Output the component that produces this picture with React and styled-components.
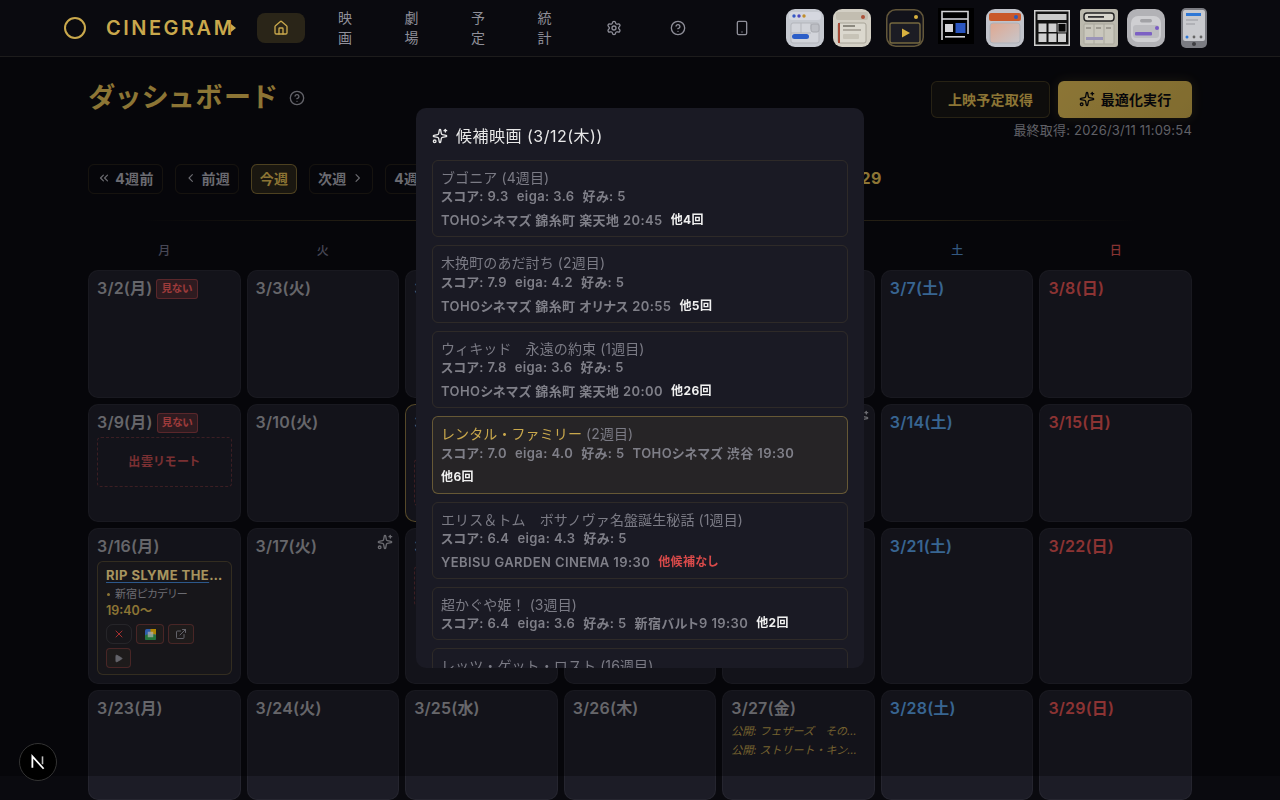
import React from 'react';
import styled, { createGlobalStyle, css } from 'styled-components';
import { House, Settings, CircleHelp, Smartphone, Sparkles, ChevronsLeft, ChevronsRight, ChevronLeft, ChevronRight, X, ExternalLink, Play } from 'lucide-react';

const GOLD = '#c9a84c';
const Global = createGlobalStyle`
  html, body { margin: 0; height: 800px; overflow: hidden; background: #0a0a0f; }
  * { box-sizing: border-box; }
  body { font-family: Inter, "Noto Sans CJK JP", sans-serif; color: #e8e8e8; font-feature-settings: "palt"; }
`;
const Page = styled.div`position: relative; width: 1280px; height: 800px; overflow: hidden; background: #0a0a0f;`;
const Header = styled.header`
  position: relative; z-index: 2; height: 57px; padding-left: 64px; display: flex; align-items: center;
  background: #0a0a0f; border-bottom: 1px solid #1d1c1c;
`;
const Logo = styled.div`display: flex; align-items: center; gap: 20px; width: 193px; flex: none; color: ${GOLD};`;
const LogoRing = styled.span`width: 22px; height: 22px; border: 2px solid ${GOLD}; border-radius: 50%; flex: none;`;
const LogoText = styled.span`position: relative; font-size: 20px; font-weight: 600; letter-spacing: 2.5px; white-space: nowrap; line-height: 24px; margin-right: -6px;`;
const LogoTip = styled.svg`position: absolute; right: -1px; top: 8px;`;
const Nav = styled.nav`display: flex; align-items: center; gap: 14px; flex: none;`;
const NavIcon = styled.div`
  width: ${p => p.$w || 50}px; height: 30px; border-radius: 8px; display: flex; align-items: center; justify-content: center;
  color: ${p => p.$active ? GOLD : '#8f8f99'}; background: ${p => p.$active ? '#2a2518' : 'transparent'};
  margin-left: ${p => p.$ml || 0}px;
`;
const NavText = styled.div`width: 52.5px; text-align: center; font-size: 14px; line-height: 20px; padding: 0 19px; color: #8f8f99; letter-spacing: .5px; font-weight: 400; font-feature-settings: normal;`;
const Thumbs = styled.div`display: flex; align-items: center; margin-left: 19px;`;
const Thumb = styled.svg`flex: none; margin-left: ${p => p.$ml}px; display: block;`;

const Main = styled.main`padding: 24px 88px 0;`;
const TopRow = styled.div`display: flex; justify-content: space-between; align-items: flex-start; height: 57px;`;
const TitleWrap = styled.div`display: flex; align-items: center; gap: 10px; height: 33px; padding-top: 1px;`;
const Title = styled.h1`margin: 0; font-size: 27px; line-height: 32px; font-weight: 700; letter-spacing: 2.5px; color: ${GOLD};`;
const HelpIcon = styled(CircleHelp)`color: #8f8f99;`;
const Actions = styled.div`display: flex; flex-direction: column; align-items: flex-end; gap: 4px;`;
const ActionRow = styled.div`display: flex; gap: 8px;`;
const GhostBtn = styled.div`
  height: 37px; width: 119px; padding-bottom: 2px; display: flex; align-items: center; justify-content: center; border-radius: 6px; font-size: 14px; font-weight: 700; letter-spacing: .2px;
  color: ${GOLD}; border: 1px solid rgba(201,168,76,.2); background: rgba(201,168,76,.06);
`;
const PrimaryBtn = styled.div`
  height: 37px; width: 134px; padding-bottom: 2px; display: flex; align-items: center; justify-content: center; gap: 6px; border-radius: 6px; font-size: 14px; font-weight: 700; letter-spacing: .1px;
  color: #0a0a0f; background: linear-gradient(135deg, #c9a94e, #b79a44); box-shadow: 0 0 12px rgba(201,168,76,.16);
`;
const Fetched = styled.div`font-size: 13px; line-height: 16px; color: #8a8a94; letter-spacing: .2px;`;
const WeekNav = styled.div`display: flex; align-items: center; gap: 12px; margin-top: 26px; height: 30px;`;
const WeekBtn = styled.div`
  height: 30px; padding: 0 8px 3px; display: flex; align-items: center; justify-content: center; gap: 4px; border-radius: 6px; font-size: 14px; font-weight: 700; white-space: nowrap; letter-spacing: .3px;
  width: ${p => p.$w}px;
  ${p => p.$today ? css`color: ${GOLD}; background: rgba(201,168,76,.15); border: 1px solid rgba(201,168,76,.45);` :
    css`color: #9a9aa2; border: 1px solid rgba(201,168,76,.12);`}
`;
const RangeLabel = styled.div`margin-left: 269px; margin-bottom: 4px; font-size: 16px; font-weight: 700; color: ${GOLD}; white-space: nowrap; letter-spacing: .4px;`;
const Divider = styled.div`height: 1px; margin-top: 26px; background: linear-gradient(90deg, transparent 5%, rgba(201,168,76,.22) 25%, rgba(201,168,76,.22) 75%, transparent 95%);`;
const Weekdays = styled.div`display: grid; grid-template-columns: repeat(7, 1fr); gap: 6px; margin-top: 22px; height: 27px;`;
const Weekday = styled.div`text-align: center; font-size: 12px; line-height: 16px; font-weight: 500; color: ${p => p.$c};`;
const Grid = styled.div`display: grid; grid-template-columns: repeat(7, 1fr); grid-template-rows: 128px 118px 156px 110px; gap: 6px;`;
const Cell = styled.div`
  position: relative; min-width: 0; padding: 8px; border-radius: 10px; background: #1c1c26;
  border: 1px solid ${p => p.$today ? 'rgba(201,168,76,.55)' : 'rgba(255,255,255,.045)'};
`;
const DateRow = styled.div`display: flex; align-items: center; gap: 4px; height: 20px; margin-bottom: 4px;`;
const DateText = styled.span`font-size: 16px; font-weight: 600; line-height: 18px; margin-bottom: 2px; white-space: nowrap; letter-spacing: .2px; color: ${p => p.$c};`;
const Badge = styled.span`font-size: 10.5px; line-height: 18px; font-weight: 600; padding: 0 4px; border-radius: 3px; color: #e05555; background: rgba(224,85,85,.2); border: 1px solid rgba(224,85,85,.4);`;
const CellSpark = styled(Sparkles)`position: absolute; top: 5px; right: 5px; color: #9a9aa2;`;
const Remote = styled.div`
  height: ${p => p.$h || 50}px; margin-top: ${p => p.$mt || 0}px; padding-bottom: 3px; display: flex; align-items: center; justify-content: center; font-size: 12px; font-weight: 600; letter-spacing: .8px;
  color: rgba(224,85,85,.75); border: 1px dashed rgba(224,85,85,.3); border-radius: 4px;
`;
const ReleaseList = styled.div`margin-top: -1px;`;
const Release = styled.div`font-size: 11px; line-height: 19px; font-style: italic; color: ${GOLD}; white-space: nowrap; overflow: hidden; text-overflow: ellipsis; opacity: .8; font-feature-settings: normal;`;
const Movie = styled.div`padding: 5px 8px; height: 114px; border-radius: 6px; border: 1px solid rgba(201,168,76,.25); background: rgba(201,168,76,.03);`;
const MovieTitle = styled.div`
  display: block; font-size: 13px; line-height: 16px; font-weight: 700; letter-spacing: .45px; color: #efd588; white-space: nowrap; overflow: hidden; text-overflow: ellipsis;
  text-decoration: underline; text-decoration-color: #3f7fc8; text-underline-offset: 2px;
`;
const MovieTheater = styled.div`display: flex; align-items: center; gap: 4px; margin-top: 3px; font-size: 11px; line-height: 16px; color: #9a9aa2;`;
const Dot = styled.span`width: 3px; height: 3px; margin: 0 1px; border-radius: 50%; background: ${GOLD};`;
const MovieTime = styled.div`font-size: 12.5px; line-height: 18px; font-weight: 600; color: ${GOLD};`;
const MiniRow = styled.div`display: flex; flex-wrap: wrap; gap: 4px; margin-top: 4px;`;
const MiniBtn = styled.div`
  width: ${p => p.$w}px; height: 20px; display: flex; align-items: center; justify-content: center; border-radius: 4px; color: #8f8f99;
  border: 1px solid ${p => p.$plain ? 'rgba(255,255,255,.1)' : 'rgba(224,85,85,.35)'};
  background: ${p => p.$plain ? 'transparent' : 'rgba(201,168,76,.06)'};
  ${p => p.$plain && css`border-radius: 7px; color: #ee4444;`}
`;
const Overlay = styled.div`
  position: absolute; inset: 0 0 24px 0; z-index: 1; display: flex; align-items: center; justify-content: center;
  background: rgba(0,0,0,.3); backdrop-filter: blur(.7px);
`;
const Modal = styled.div`width: 448px; height: 560px; padding: 16px; overflow: hidden; border-radius: 10px; background: #1a1a24;`;
const ModalTitle = styled.div`display: flex; align-items: center; gap: 8px; height: 24px; margin-bottom: 12px; font-size: 16px; line-height: 24px; font-weight: 400; letter-spacing: .5px; color: #e8e8e8;`;
const CardList = styled.div`display: flex; flex-direction: column; gap: 8px;`;
const Card = styled.div`
  flex: none; padding: 8px; border-radius: 6px;
  border: 1px solid ${p => p.$sel ? 'rgba(201,168,76,.4)' : 'rgba(201,168,76,.12)'};
  background: ${p => p.$sel ? 'rgba(201,168,76,.07)' : 'transparent'};
`;
const CardTitle = styled.div`font-size: 14px; line-height: 17.4px; padding-bottom: 2px; letter-spacing: .1px; color: #7b7b85; white-space: nowrap; font-feature-settings: normal;`;
const CardName = styled.span`color: ${p => p.$sel ? GOLD : 'inherit'};`;
const MetaRow = styled.div`display: flex; gap: 8px; font-size: 13px; line-height: 16px; font-weight: 600; color: #7f7f88; white-space: nowrap; letter-spacing: .4px; & + & { margin-top: 8px; }`;
const Extra = styled.span`font-size: 12px; font-weight: 700; color: ${p => p.$none ? '#d84a4a' : '#f0f0f0'};`;
const NextBadge = styled.div`
  position: absolute; z-index: 3; left: 19px; bottom: 19px; width: 38px; height: 38px; border-radius: 50%; background: #000; border: 1px solid #333;
  display: flex; align-items: center; justify-content: center;
`;

const Ic = ({ children, ml = 0, w = 38, h = 38 }) => <Thumb $ml={ml} width={w} height={h} viewBox={`0 0 ${w} ${h}`}>{children}</Thumb>;
const ThumbSet = () => (
  <Thumbs>
    <Ic>
      <rect width="38" height="38" rx="9" fill="#c6c9d0" />
      <rect x="3" y="3" width="32" height="8" rx="3" fill="#d5d7df" />
      <circle cx="8" cy="7" r="1.7" fill="#3559c4" /><circle cx="13" cy="7" r="1.7" fill="#4b47c0" /><circle cx="18" cy="7" r="1.7" fill="#c08d2c" />
      <rect x="5" y="14" width="28" height="20" rx="2" fill="#d2d4da" stroke="#b3b5bb" />
      <path d="M15 14v10M25 14v6M5 24h20" stroke="#b3b5bb" />
      <rect x="25" y="15" width="8" height="8" rx="2" fill="#bdbfc5" stroke="#a6a8ae" />
      <rect x="6" y="25" width="17" height="5" rx="2.5" fill="#2c5ec8" />
    </Ic>
    <Ic ml={9}>
      <rect width="38" height="38" rx="9" fill="#d3cfc4" />
      <rect x="3" y="3" width="32" height="8" rx="2" fill="#c2bdb0" />
      <circle cx="30" cy="8" r="2" fill="#ac5138" />
      <rect x="5" y="14" width="28" height="20" rx="2" fill="#dbd8ce" stroke="#a8a498" />
      <rect x="5" y="14" width="2" height="20" fill="#a84a36" />
      <path d="M10 17h12" stroke="#6b675d" strokeWidth="1.4" /><path d="M10 21h18" stroke="#8f8b80" strokeWidth="1.2" />
      <rect x="10" y="25" width="16" height="5" rx="1" fill="#c7c3b7" />
    </Ic>
    <Ic ml={15}>
      <rect x=".75" y=".75" width="36.5" height="36.5" rx="9" fill="#12121a" stroke="#63573a" strokeWidth="1.5" />
      <circle cx="30" cy="8" r="2" fill="#d8b13f" />
      <rect x="4" y="14" width="30" height="20" rx="2" fill="#1c1c24" stroke="#76683f" strokeWidth="1.4" />
      <path d="M16 19.5l8 4.5-8 4.5z" fill="#d9b13f" />
    </Ic>
    <Ic ml={14} w={36} h={40}>
      <rect width="36" height="36" fill="#000" />
      <path d="M4 32V3.5h26V26" fill="none" stroke="#d4d4d8" strokeWidth="1.6" />
      <path d="M4 11h26" stroke="#d4d4d8" strokeWidth="1.6" />
      <rect x="7" y="16" width="8" height="8" fill="#d4d4d8" />
      <rect x="17.5" y="15" width="10" height="10" fill="#2a55c0" />
      <rect x="7" y="28" width="20" height="1.6" fill="#d4d4d8" />
    </Ic>
    <Ic ml={12}>
      <defs><linearGradient id="pg" x1="0" y1="0" x2="1" y2="1"><stop offset="0" stopColor="#e0a78f" /><stop offset="1" stopColor="#c7c7cc" /></linearGradient></defs>
      <rect width="38" height="38" rx="9" fill="#c1c3ca" />
      <rect x="3" y="4" width="32" height="8" rx="2" fill="#c9592a" />
      <circle cx="30" cy="8" r="2" fill="#2f5bb8" />
      <rect x="4" y="14" width="30" height="20" rx="3" fill="url(#pg)" stroke="#b0b2b8" />
    </Ic>
    <Ic ml={10} w={36}>
      <rect y="1" width="36" height="36" fill="#cfcfcf" />
      <rect x="1.5" y="2.5" width="33" height="33" fill="#111" />
      <rect x="3.5" y="5" width="29" height="6" fill="#c9c9c9" />
      <path d="M4.5 14.5h8v8.5h-8zM14.5 14.5h8v8.5h-8zM4.5 24.5h8v8.5h-8zM14.5 24.5h8v8.5h-8zM24 24.5h8v8.5h-8z" fill="#cfcfcf" />
      <rect x="24" y="14.5" width="8" height="8.5" fill="#060606" stroke="#cfcfcf" strokeWidth=".8" />
    </Ic>
    <Ic ml={10}>
      <rect width="38" height="38" rx="3" fill="#bbb9ad" />
      <rect x="4" y="4" width="30" height="8" rx="3" fill="#d8d6cc" stroke="#222" strokeWidth="1.4" />
      <rect x="8" y="7" width="16" height="1.8" fill="#333" />
      <rect x="4" y="15" width="30" height="20" rx="1" fill="#c9c7bc" stroke="#a9a79c" />
      <path d="M14 15v20M24 15v20" stroke="#a9a79c" />
      <path d="M6 19h5M16 19h5M26 19h5" stroke="#8e8c83" strokeWidth="1.6" />
      <rect x="6" y="28" width="17" height="3" fill="#9a94b8" />
    </Ic>
    <Ic ml={9}>
      <rect width="38" height="38" rx="10" fill="#b2b2b6" />
      <rect x="4" y="7" width="30" height="26" rx="7" fill="#cfcfd2" />
      <rect x="13" y="10" width="12" height="3.4" rx="1.7" fill="#a2a2a6" />
      <rect x="6" y="16" width="26" height="13" rx="3" fill="#bcbcc0" />
      <circle cx="30" cy="19" r="2" fill="#7a5cc4" />
      <rect x="8" y="23" width="17" height="3.4" rx="1" fill="#7c60c4" />
    </Ic>
    <Ic ml={16} w={26} h={40}>
      <rect width="26" height="40" rx="5" fill="#7b7c82" />
      <rect x="2" y="2" width="22" height="31" rx="2" fill="#c9cace" />
      <rect x="5" y="5" width="15" height="3" fill="#2f78d6" />
      <path d="M5 12h12M5 16h9" stroke="#a8a9ae" strokeWidth="1.5" />
      <circle cx="6" cy="29" r="1.5" fill="#2f78d6" /><circle cx="13" cy="29" r="1.4" fill="#666" /><circle cx="20" cy="29" r="1.4" fill="#666" />
      <circle cx="13" cy="36" r="2" fill="#3e3e42" />
    </Ic>
  </Thumbs>
);

const days = ['月','火','水','木','金','土','日'];
const dayColor = i => (i === 5 ? '#5191d0' : i === 6 ? '#c94a4a' : '#939399');
const headColor = i => (i === 5 ? '#4a7fb8' : i === 6 ? '#c04a4a' : '#66667c');
const weeks = [[2,3,4,5,6,7,8],[9,10,11,12,13,14,15],[16,17,18,19,20,21,22],[23,24,25,26,27,28,29]];
const extras = {
  2: { badge: true }, 9: { badge: true, remote: 50 }, 11: { today: true, remote: 47, mt: 26 }, 13: { spark: true },
  16: { movie: true }, 17: { spark: true }, 18: { remote: 40, mt: 9 },
  27: { releases: ['公開: フェザーズ　その他の物語', '公開: ストリート・キングダム'] },
};

const cards = [
  { name: 'ブゴニア', wk: 4, rows: [['スコア: 9.3','eiga: 3.6','好み: 5'],['TOHOシネマズ 錦糸町 楽天地 20:45', { x: '他4回' }]] },
  { name: '木挽町のあだ討ち', wk: 2, rows: [['スコア: 7.9','eiga: 4.2','好み: 5'],['TOHOシネマズ 錦糸町 オリナス 20:55', { x: '他5回' }]] },
  { name: 'ウィキッド　永遠の約束', wk: 1, rows: [['スコア: 7.8','eiga: 3.6','好み: 5'],['TOHOシネマズ 錦糸町 楽天地 20:00', { x: '他26回' }]] },
  { name: 'レンタル・ファミリー', wk: 2, sel: true, rows: [['スコア: 7.0','eiga: 4.0','好み: 5','TOHOシネマズ 渋谷 19:30'],[{ x: '他6回' }]] },
  { name: 'エリス＆トム　ボサノヴァ名盤誕生秘話', wk: 1, rows: [['スコア: 6.4','eiga: 4.3','好み: 5'],['YEBISU GARDEN CINEMA 19:30', { x: '他候補なし', none: true }]] },
  { name: '超かぐや姫！', wk: 3, rows: [['スコア: 6.4','eiga: 3.6','好み: 5','新宿バルト9 19:30', { x: '他2回' }]] },
  { name: 'レッツ・ゲット・ロスト', wk: 16, rows: [['スコア: 6.2','eiga: 3.5','好み: 5']] },
];

const MovieCard = () => (
  <Movie>
    <MovieTitle>RIP SLYME THE MOVIE</MovieTitle>
    <MovieTheater><Dot />新宿ピカデリー</MovieTheater>
    <MovieTime>19:40〜</MovieTime>
    <MiniRow>
      <MiniBtn $w={26} $plain><X size={12} /></MiniBtn>
      <MiniBtn $w={28}>
        <svg width="11" height="11" viewBox="0 0 12 12"><rect width="12" height="12" rx="2" fill="#4285f4" /><rect x="6" y="0" width="6" height="6" fill="#fbbc04" /><rect x="0" y="6" width="12" height="6" rx="2" fill="#34a853" /><rect x="3" y="3" width="6" height="6" fill="#fff" opacity=".7" /></svg>
      </MiniBtn>
      <MiniBtn $w={26}><ExternalLink size={12} /></MiniBtn>
      <MiniBtn $w={25}><Play size={9} fill="currentColor" /></MiniBtn>
    </MiniRow>
  </Movie>
);

export default function App() {
  return (
    <Page>
      <Global />
      <Header>
        <Logo>
          <LogoRing />
          <LogoText>CINEGRAM
            <LogoTip width="5" height="8" viewBox="0 0 5 8"><path d="M0 0l5 4-5 4z" fill={GOLD} /></LogoTip>
          </LogoText>
        </Logo>
        <Nav>
          <NavIcon $active $w={48}><House size={16} /></NavIcon>
          <NavText>映画</NavText>
          <NavText>劇場</NavText>
          <NavText>予定</NavText>
          <NavText>統計</NavText>
          <NavIcon $ml={4}><Settings size={16} /></NavIcon>
          <NavIcon><CircleHelp size={16} /></NavIcon>
          <NavIcon><Smartphone size={16} /></NavIcon>
        </Nav>
        <ThumbSet />
      </Header>
      <Main>
        <TopRow>
          <TitleWrap>
            <Title>ダッシュボード</Title>
            <HelpIcon size={16} />
          </TitleWrap>
          <Actions>
            <ActionRow>
              <GhostBtn>上映予定取得</GhostBtn>
              <PrimaryBtn><Sparkles size={16} />最適化実行</PrimaryBtn>
            </ActionRow>
            <Fetched>最終取得: 2026/3/11 11:09:54</Fetched>
          </Actions>
        </TopRow>
        <WeekNav>
          <WeekBtn $w={75}><ChevronsLeft size={14} />4週前</WeekBtn>
          <WeekBtn $w={64}><ChevronLeft size={14} />前週</WeekBtn>
          <WeekBtn $w={46} $today>今週</WeekBtn>
          <WeekBtn $w={64}>次週<ChevronRight size={14} /></WeekBtn>
          <WeekBtn $w={75}>4週後<ChevronsRight size={14} /></WeekBtn>
          <RangeLabel>2026/3/2 〜 3/29</RangeLabel>
        </WeekNav>
        <Divider />
        <Weekdays>{days.map((d, i) => <Weekday key={d} $c={headColor(i)}>{d}</Weekday>)}</Weekdays>
        <Grid>
          {weeks.flatMap(w => w.map((n, i) => {
            const e = extras[n] || {};
            return (
              <Cell key={n} $today={e.today}>
                <DateRow>
                  <DateText $c={dayColor(i)}>3/{n}({days[i]})</DateText>
                  {e.badge && <Badge>見ない</Badge>}
                </DateRow>
                {e.spark && <CellSpark size={16} />}
                {e.remote && <Remote $h={e.remote} $mt={e.mt}>出雲リモート</Remote>}
                {e.movie && <MovieCard />}
                {e.releases && <ReleaseList>{e.releases.map(r => <Release key={r}>{r}</Release>)}</ReleaseList>}
              </Cell>
            );
          }))}
        </Grid>
      </Main>
      <Overlay>
        <Modal>
          <ModalTitle><Sparkles size={16} />候補映画 (3/12(木))</ModalTitle>
          <CardList>
            {cards.map(c => (
              <Card key={c.name} $sel={c.sel}>
                <CardTitle><CardName $sel={c.sel}>{c.name}</CardName> ({c.wk}週目)</CardTitle>
                {c.rows.map((r, i) => (
                  <MetaRow key={i}>
                    {r.map((t, j) => typeof t === 'string' ? <span key={j}>{t}</span> : <Extra key={j} $none={t.none}>{t.x}</Extra>)}
                  </MetaRow>
                ))}
              </Card>
            ))}
          </CardList>
        </Modal>
      </Overlay>
      <NextBadge>
        <svg width="18" height="18" viewBox="0 0 16 16"><path d="M3 13V3l10 11" fill="none" stroke="#fff" strokeWidth="1.6" /><path d="M12 3v7" stroke="#bbb" strokeWidth="1.4" /></svg>
      </NextBadge>
    </Page>
  );
}
